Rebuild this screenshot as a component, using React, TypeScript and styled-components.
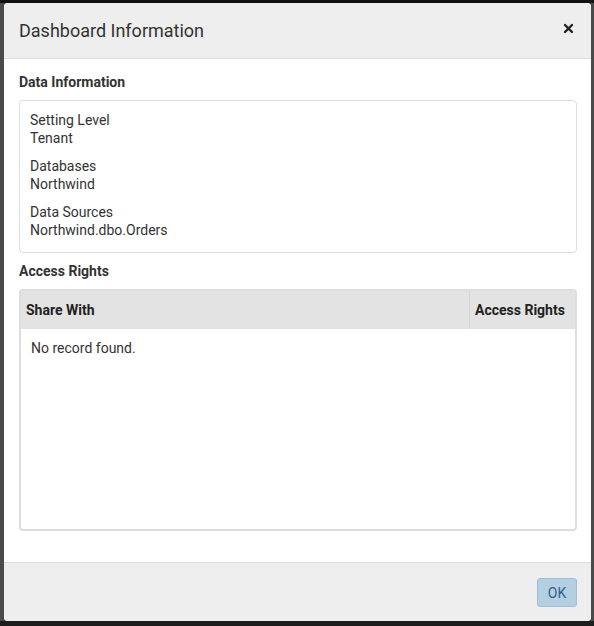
import React from "react";
import styled, { createGlobalStyle } from "styled-components";

const Global = createGlobalStyle`
  html, body { margin: 0; padding: 0; }
  body {
    background: #2b2b2b;
    font-family: Roboto, "Open Sans", Arial, sans-serif;
    color: #333;
  }
`;

const Backdrop = styled.div`
  height: 626px;
  box-sizing: border-box;
  padding: 3px 3px 5px 4px;
  background: linear-gradient(to bottom, #111 0, #111 3px, #4a4a4a 3px, #4a4a4a 621px, #1d1d1d 621px);
  overflow: hidden;
`;

const Modal = styled.div`
  height: 618px;
  background: #fff;
  border-radius: 4px;
  display: flex;
  flex-direction: column;
  overflow: hidden;
`;

const Header = styled.div`
  height: 56px;
  box-sizing: border-box;
  background: #eeeeee;
  border-bottom: 1px solid #dddddd;
  display: flex;
  align-items: center;
  justify-content: space-between;
  padding: 0 17px 0 15px;
`;

const Title = styled.h4`
  margin: 0;
  font-size: 18px;
  font-weight: 400;
  color: #333;
  line-height: 25px;
`;

const Close = styled.button`
  border: none;
  background: none;
  padding: 0;
  margin: 0;
  width: 12px;
  height: 12px;
  display: flex;
  align-items: center;
  justify-content: center;
  cursor: pointer;
  margin-top: -4px;
`;

const Body = styled.div`
  flex: 1;
  padding: 14px 14px 0 15px;
  display: flex;
  flex-direction: column;
`;

const SectionLabel = styled.div<{ $top?: number }>`
  font-size: 14px;
  font-weight: 700;
  line-height: 18px;
  color: #333;
  margin-top: ${(p) => p.$top ?? 0}px;
  margin-bottom: 9px;
`;

const InfoBox = styled.div`
  border: 1px solid #dddddd;
  border-radius: 4px;
  padding: 10px 10px 13px;
  display: flex;
  flex-direction: column;
  gap: 10px;
`;

const InfoGroup = styled.div`
  font-size: 14px;
  line-height: 18px;
  color: #333;
`;

const Table = styled.div`
  height: 242px;
  box-sizing: border-box;
  border: 2px solid #dddddd;
  border-radius: 4px;
  display: flex;
  flex-direction: column;
  overflow: hidden;
`;

const HeadRow = styled.div`
  height: 38px;
  background: #e3e3e3;
  display: grid;
  grid-template-columns: 1fr 106px;
  flex-shrink: 0;
`;

const HeadCell = styled.div<{ $divider?: boolean }>`
  display: flex;
  align-items: center;
  padding-left: 5px;
  font-size: 14px;
  font-weight: 700;
  color: #222;
  border-left: ${(p) => (p.$divider ? "1px solid #d6d6d6" : "none")};
`;

const Empty = styled.div`
  padding: 11px 10px;
  font-size: 14px;
  line-height: 16px;
  color: #333;
`;

const Footer = styled.div`
  height: 59px;
  box-sizing: border-box;
  background: #eeeeee;
  border-top: 1px solid #dddddd;
  display: flex;
  align-items: center;
  justify-content: flex-end;
  padding: 0 14px 0 15px;
`;

const OkButton = styled.button`
  width: 40px;
  height: 29px;
  border: 1px solid #9fc0d8;
  border-radius: 3px;
  background: #b4cfe1;
  color: #2f5f8a;
  font-family: Roboto, Arial, sans-serif;
  font-size: 14px;
  padding: 0;
  margin-top: 1px;
  cursor: pointer;
`;

export default function App() {
  return (
    <>
      <Global />
      <Backdrop>
        <Modal>
          <Header>
            <Title>Dashboard Information</Title>
            <Close aria-label="Close">
              <svg width="11" height="11" viewBox="0 0 11 11">
                <path d="M2 2 L9 9 M9 2 L2 9" stroke="#222" strokeWidth="2.4" strokeLinecap="round" />
              </svg>
            </Close>
          </Header>
          <Body>
            <SectionLabel>Data Information</SectionLabel>
            <InfoBox>
              <InfoGroup>
                Setting Level
                <br />
                Tenant
              </InfoGroup>
              <InfoGroup>
                Databases
                <br />
                Northwind
              </InfoGroup>
              <InfoGroup>
                Data Sources
                <br />
                Northwind.dbo.Orders
              </InfoGroup>
            </InfoBox>
            <SectionLabel $top={9}>Access Rights</SectionLabel>
            <Table>
              <HeadRow>
                <HeadCell>Share With</HeadCell>
                <HeadCell $divider>Access Rights</HeadCell>
              </HeadRow>
              <Empty>No record found.</Empty>
            </Table>
          </Body>
          <Footer>
            <OkButton>OK</OkButton>
          </Footer>
        </Modal>
      </Backdrop>
    </>
  );
}
